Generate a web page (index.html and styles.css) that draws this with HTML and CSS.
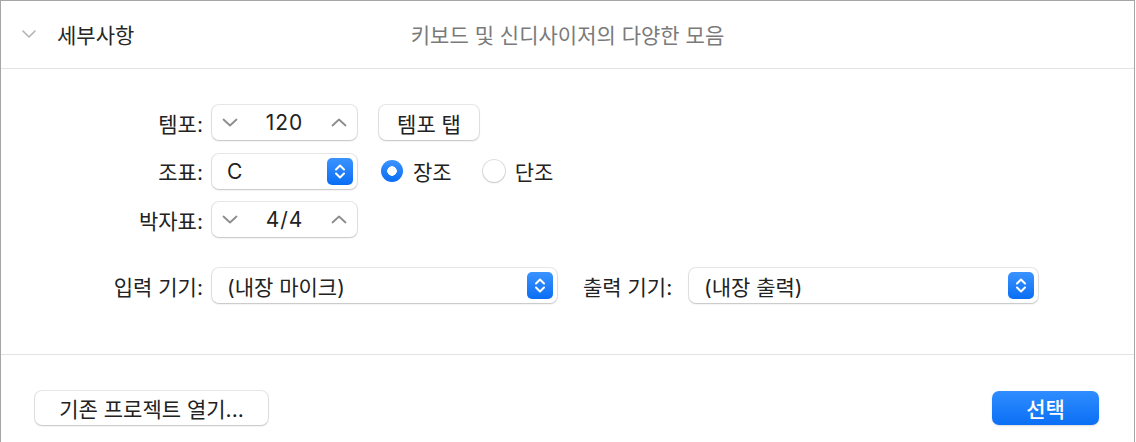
FILE: index.html
```html
<!DOCTYPE html>
<html>
<head>
    <link rel="stylesheet" href="styles.css">
</head>
<body>
    <div class="window">
        <div class="header">
            <div class="header-left">
                <svg class="disclosure" width="14" height="8" viewBox="0 0 14 8">
                    <polyline points="1,1 7,7 13,1" fill="none" stroke="#b4b4b4" stroke-width="1.6" stroke-linecap="round" stroke-linejoin="round"/>
                </svg>
                <span class="title">세부사항</span>
            </div>
            <div class="subtitle">키보드 및 신디사이저의 다양한 모음</div>
            <div></div>
        </div>

        <div class="settings">
            <div class="form">
                <div class="label">템포:</div>
                <div class="controls">
                    <div class="stepper">
                        <svg width="16" height="9" viewBox="0 0 16 9"><polyline points="1.5,1.5 8,7.5 14.5,1.5" fill="none" stroke="#8c8c8c" stroke-width="1.8" stroke-linecap="round" stroke-linejoin="round"/></svg>
                        <span class="value">120</span>
                        <svg width="16" height="9" viewBox="0 0 16 9"><polyline points="1.5,7.5 8,1.5 14.5,7.5" fill="none" stroke="#8c8c8c" stroke-width="1.8" stroke-linecap="round" stroke-linejoin="round"/></svg>
                    </div>
                    <button class="btn tap-btn">템포 탭</button>
                </div>

                <div class="label">조표:</div>
                <div class="controls">
                    <div class="select key-select">
                        <span>C</span>
                        <svg class="updown" width="26" height="27" viewBox="0 0 26 27">
                            <defs>
                                <linearGradient id="blue1" x1="0" y1="0" x2="0" y2="1">
                                    <stop offset="0" stop-color="#3b93ff"/>
                                    <stop offset="1" stop-color="#0a6ef4"/>
                                </linearGradient>
                            </defs>
                            <rect x="0" y="0" width="26" height="27" rx="5" fill="url(#blue1)"/>
                            <polyline points="9,11.5 13,7.5 17,11.5" fill="none" stroke="#fff" stroke-width="2" stroke-linecap="round" stroke-linejoin="round"/>
                            <polyline points="9,15.5 13,19.5 17,15.5" fill="none" stroke="#fff" stroke-width="2" stroke-linecap="round" stroke-linejoin="round"/>
                        </svg>
                    </div>
                    <label class="radio checked"><span class="dot"></span>장조</label>
                    <label class="radio"><span class="dot"></span>단조</label>
                </div>

                <div class="label">박자표:</div>
                <div class="controls">
                    <div class="stepper">
                        <svg width="16" height="9" viewBox="0 0 16 9"><polyline points="1.5,1.5 8,7.5 14.5,1.5" fill="none" stroke="#8c8c8c" stroke-width="1.8" stroke-linecap="round" stroke-linejoin="round"/></svg>
                        <span class="value">4/4</span>
                        <svg width="16" height="9" viewBox="0 0 16 9"><polyline points="1.5,7.5 8,1.5 14.5,7.5" fill="none" stroke="#8c8c8c" stroke-width="1.8" stroke-linecap="round" stroke-linejoin="round"/></svg>
                    </div>
                </div>

                <div class="label devices">입력 기기:</div>
                <div class="controls devices">
                    <div class="select input-select">
                        <span>(내장 마이크)</span>
                        <svg class="updown" width="26" height="27" viewBox="0 0 26 27">
                            <defs>
                                <linearGradient id="blue2" x1="0" y1="0" x2="0" y2="1">
                                    <stop offset="0" stop-color="#3b93ff"/>
                                    <stop offset="1" stop-color="#0a6ef4"/>
                                </linearGradient>
                            </defs>
                            <rect x="0" y="0" width="26" height="27" rx="5" fill="url(#blue2)"/>
                            <polyline points="9,11.5 13,7.5 17,11.5" fill="none" stroke="#fff" stroke-width="2" stroke-linecap="round" stroke-linejoin="round"/>
                            <polyline points="9,15.5 13,19.5 17,15.5" fill="none" stroke="#fff" stroke-width="2" stroke-linecap="round" stroke-linejoin="round"/>
                        </svg>
                    </div>
                    <div class="label output-label">출력 기기:</div>
                    <div class="select output-select">
                        <span>(내장 출력)</span>
                        <svg class="updown" width="26" height="27" viewBox="0 0 26 27">
                            <defs>
                                <linearGradient id="blue3" x1="0" y1="0" x2="0" y2="1">
                                    <stop offset="0" stop-color="#3b93ff"/>
                                    <stop offset="1" stop-color="#0a6ef4"/>
                                </linearGradient>
                            </defs>
                            <rect x="0" y="0" width="26" height="27" rx="5" fill="url(#blue3)"/>
                            <polyline points="9,11.5 13,7.5 17,11.5" fill="none" stroke="#fff" stroke-width="2" stroke-linecap="round" stroke-linejoin="round"/>
                            <polyline points="9,15.5 13,19.5 17,15.5" fill="none" stroke="#fff" stroke-width="2" stroke-linecap="round" stroke-linejoin="round"/>
                        </svg>
                    </div>
                </div>
            </div>
        </div>

        <div class="footer">
            <button class="btn open-btn">기존 프로젝트 열기...</button>
            <button class="btn primary">선택</button>
        </div>
    </div>
</body>
</html>
```

FILE: styles.css
```css
body {
    margin: 0;
    background: #ffffff;
    font-family: Inter, "Noto Sans CJK KR", sans-serif;
    color: #222222;
}
.window {
    width: 1135px;
    height: 442px;
    box-sizing: border-box;
    border: 1px solid #a6a6a6;
    border-bottom: none;
    background: #ffffff;
    display: flex;
    flex-direction: column;
}
.header {
    height: 67px;
    border-bottom: 1px solid #e3e3e3;
    display: grid;
    grid-template-columns: 1fr auto 1fr;
    align-items: center;
}
.header-left {
    display: flex;
    align-items: center;
    padding-left: 21px;
    padding-bottom: 2px;
}
.disclosure {
    margin-right: 21px;
}
.title {
    font-size: 21px;
    color: #262626;
}
.subtitle {
    font-size: 21px;
    color: #7a7a7a;
    padding-bottom: 2px;
}
.settings {
    height: 286px;
    box-sizing: border-box;
    border-bottom: 1px solid #e3e3e3;
    padding-top: 36px;
}
.form {
    display: grid;
    grid-template-columns: 202px 1fr;
    column-gap: 9px;
    row-gap: 13.5px;
    align-items: center;
}
.label {
    font-size: 21px;
    text-align: right;
    color: #222222;
}
.controls {
    display: flex;
    align-items: center;
    height: 35px;
}
.devices {
    margin-top: 17.5px;
}
.stepper,
.select,
.btn {
    height: 35px;
    box-sizing: border-box;
    background: #ffffff;
    border: none;
    border-radius: 7px;
    box-shadow: 0 0 0 1px rgba(0, 0, 0, 0.09), 0 1px 2px rgba(0, 0, 0, 0.16);
    font-family: inherit;
    color: #222222;
}
.stepper {
    width: 145px;
    display: flex;
    align-items: center;
    justify-content: space-between;
    padding: 0 10px;
}
.value {
    font-size: 21px;
    letter-spacing: 1px;
}
.tap-btn {
    width: 100px;
    margin-left: 22px;
}
.select {
    display: flex;
    align-items: center;
    justify-content: space-between;
    padding: 0 4px 0 15px;
    font-size: 21px;
}
.key-select {
    width: 145px;
}
.input-select {
    width: 345px;
}
.output-select {
    width: 349px;
}
.output-label {
    width: 106px;
    margin-left: 26px;
    text-align: left;
}
.radio {
    display: flex;
    align-items: center;
    font-size: 21px;
    margin-left: 24px;
}
.radio + .radio {
    margin-left: 31px;
}
.dot {
    width: 22px;
    height: 22px;
    box-sizing: border-box;
    border-radius: 50%;
    background: #ffffff;
    box-shadow: 0 0 0 1px rgba(0, 0, 0, 0.12), 0 1px 2px rgba(0, 0, 0, 0.12);
    margin-right: 10px;
}
.radio.checked .dot {
    background: radial-gradient(circle, #ffffff 0 4.5px, transparent 5px), linear-gradient(#3b93ff, #0a6ef4);
    box-shadow: none;
}
.footer {
    flex: 1;
    display: flex;
    justify-content: space-between;
    align-items: flex-start;
    padding: 36px 35px 0 34px;
}
.btn {
    height: 34px;
    font-size: 21px;
    cursor: pointer;
}
.tap-btn {
    height: 35px;
}
.open-btn {
    width: 233px;
}
.primary {
    width: 107px;
    color: #ffffff;
    font-weight: 500;
    background: linear-gradient(#2f8dff, #0b6ff5);
    box-shadow: 0 1px 2px rgba(0, 0, 0, 0.15);
}
```
